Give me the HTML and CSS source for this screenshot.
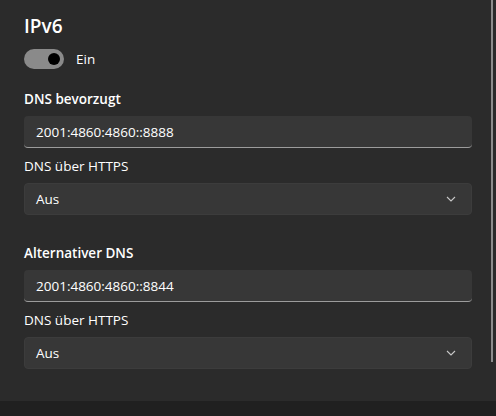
FILE: index.html
```html
<!DOCTYPE html>
<html lang="de">
<head>
<meta charset="utf-8">
<link rel="stylesheet" href="styles.css">
</head>
<body>
<div class="page">
  <main class="panel">
    <h1 class="title">IPv6</h1>
    <div class="toggle-row">
      <span class="toggle"><span class="knob"></span></span>
      <span class="toggle-label">Ein</span>
    </div>

    <section class="group">
      <h2 class="group-title">DNS bevorzugt</h2>
      <div class="input"><span>2001:4860:4860::8888</span></div>
      <div class="sub-label">DNS über HTTPS</div>
      <div class="select">
        <span>Aus</span>
        <svg class="chev" width="10" height="6" viewBox="0 0 10 6"><path d="M1 1 L5 5 L9 1" fill="none" stroke="#c8c8c8" stroke-width="1.1"/></svg>
      </div>
    </section>

    <section class="group group-2">
      <h2 class="group-title">Alternativer DNS</h2>
      <div class="input"><span>2001:4860:4860::8844</span></div>
      <div class="sub-label">DNS über HTTPS</div>
      <div class="select">
        <span>Aus</span>
        <svg class="chev" width="10" height="6" viewBox="0 0 10 6"><path d="M1 1 L5 5 L9 1" fill="none" stroke="#c8c8c8" stroke-width="1.1"/></svg>
      </div>
    </section>
  </main>
  <div class="scrollbar"></div>
  <footer class="footer"></footer>
</div>
</body>
</html>
```
FILE: styles.css
```css
html, body {
  margin: 0;
  padding: 0;
  background: #2b2b2b;
  font-family: "Segoe UI", "Open Sans", "Noto Sans", sans-serif;
  color: #ffffff;
}
.page {
  position: relative;
  width: 496px;
  height: 416px;
  display: flex;
  flex-direction: column;
  overflow: hidden;
}
.panel {
  flex: 1;
  padding: 12px 24px 0 24px;
  width: 448px;
}
.title {
  margin: 0;
  font-size: 19px;
  line-height: 28px;
  font-weight: 600;
}
.toggle-row {
  display: flex;
  align-items: center;
  gap: 12px;
  margin-top: 9px;
  height: 20px;
}
.toggle {
  width: 40px;
  height: 20px;
  border-radius: 10px;
  background: #8a8a8a;
  display: flex;
  align-items: center;
  justify-content: flex-end;
  padding-right: 4px;
  box-sizing: border-box;
}
.knob {
  width: 12px;
  height: 12px;
  border-radius: 50%;
  background: #000;
}
.toggle-label {
  font-size: 13.5px;
  line-height: 20px;
}
.group {
  margin-top: 20px;
}
.group-2 {
  margin-top: 28px;
}
.group-title {
  margin: 0;
  font-size: 13.5px;
  line-height: 20px;
  font-weight: 600;
}
.input {
  margin-top: 7px;
  height: 32px;
  box-sizing: border-box;
  background: #373737;
  border-radius: 4px;
  border-bottom: 1px solid #9c9c9c;
  padding: 0 12px;
  display: flex;
  align-items: center;
  font-size: 13.5px;
}
.sub-label {
  margin-top: 8px;
  font-size: 13.5px;
  line-height: 20px;
}
.select {
  margin-top: 7px;
  height: 32px;
  box-sizing: border-box;
  background: #373737;
  border: 1px solid #3c3c3c;
  border-radius: 4px;
  padding: 0 12px 0 11px;
  display: flex;
  align-items: center;
  justify-content: space-between;
  font-size: 13.5px;
}
.chev {
  margin-right: 3px;
}
.scrollbar {
  position: absolute;
  right: 3px;
  top: 0;
  width: 2px;
  height: 362px;
  background: #8d8d8d;
}
.footer {
  height: 15px;
  background: #202020;
}
```
